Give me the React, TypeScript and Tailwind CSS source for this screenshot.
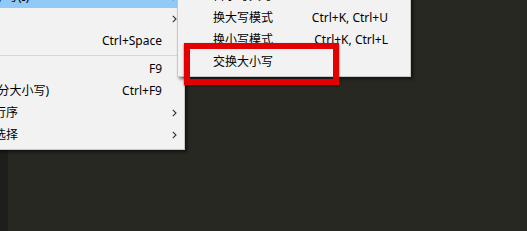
import { ReactNode } from "react";

const font = { fontFamily: "'Noto Sans', 'Noto Sans CJK SC', sans-serif" };

function Chevron() {
	return (
		<svg width="5" height="8" viewBox="0 0 5 8" className="text-[#333]">
			<path d="M0.8 0.8 L4 4 L0.8 7.2" fill="none" stroke="currentColor" strokeWidth="1.1" />
		</svg>
	);
}

type Item = {
	label: string;
	shortcut?: string;
	sub?: boolean;
	active?: boolean;
};

function Row({ item }: { item: Item }) {
	return (
		<div
			className={`flex items-center h-[22px] pl-[35px] text-[12px] text-black whitespace-nowrap ${
				item.active ? "bg-[#91c9f7]" : ""
			}`}
		>
			<span className="flex-1">{item.label}</span>
			{item.shortcut && <span>{item.shortcut}</span>}
			<span className="w-[22px] flex justify-center pl-[2px]">
				{item.sub && <Chevron />}
			</span>
		</div>
	);
}

function Menu({ children, className }: { children: ReactNode; className: string }) {
	return (
		<div
			className={`absolute bg-[#f2f2f2] border border-[#c8c8c8] py-[3px] shadow-[2px_2px_3px_rgba(0,0,0,0.55)] ${className}`}
		>
			{children}
		</div>
	);
}

const mainTop: Item[] = [
	{ label: "转换为大小写(I)", sub: true, active: true },
	{ label: "折行", sub: true },
	{ label: "显示补全", shortcut: "Ctrl+Space" },
];

const mainBottom: Item[] = [
	{ label: "排序行", shortcut: "F9" },
	{ label: "排序行(区分大小写)", shortcut: "Ctrl+F9" },
	{ label: "随机排列行序", sub: true },
	{ label: "随机排列选择", sub: true },
];

const caseItems: Item[] = [
	{ label: "首字母大写" },
	{ label: "换大写模式", shortcut: "Ctrl+K, Ctrl+U" },
	{ label: "换小写模式", shortcut: "Ctrl+K, Ctrl+L" },
	{ label: "交换大小写" },
];

export default function App() {
	return (
		<div className="relative w-[527px] h-[231px] overflow-hidden bg-[#272822] flex" style={font}>
			<div className="w-[8px] bg-[#1e1f1c]" />

			<Menu className="left-[-90px] top-[-18px] w-[275px]">
				{mainTop.map((item) => (
					<Row key={item.label} item={item} />
				))}
				<div className="h-[6px] flex items-center pl-[33px]">
					<div className="h-px w-full bg-[#d7d7d7]" />
				</div>
				{mainBottom.map((item) => (
					<Row key={item.label} item={item} />
				))}
			</Menu>

			<Menu className="left-[177px] top-[-19px] w-[234px]">
				{caseItems.map((item) => (
					<Row key={item.label} item={item} />
				))}
			</Menu>

			{/* highlight box */}
			<div className="absolute left-[184px] top-[43px] w-[155px] h-[42px] border-[6px] border-[#e40000] shadow-[0_1px_2px_rgba(0,0,0,0.6)]" />
		</div>
	);
}
